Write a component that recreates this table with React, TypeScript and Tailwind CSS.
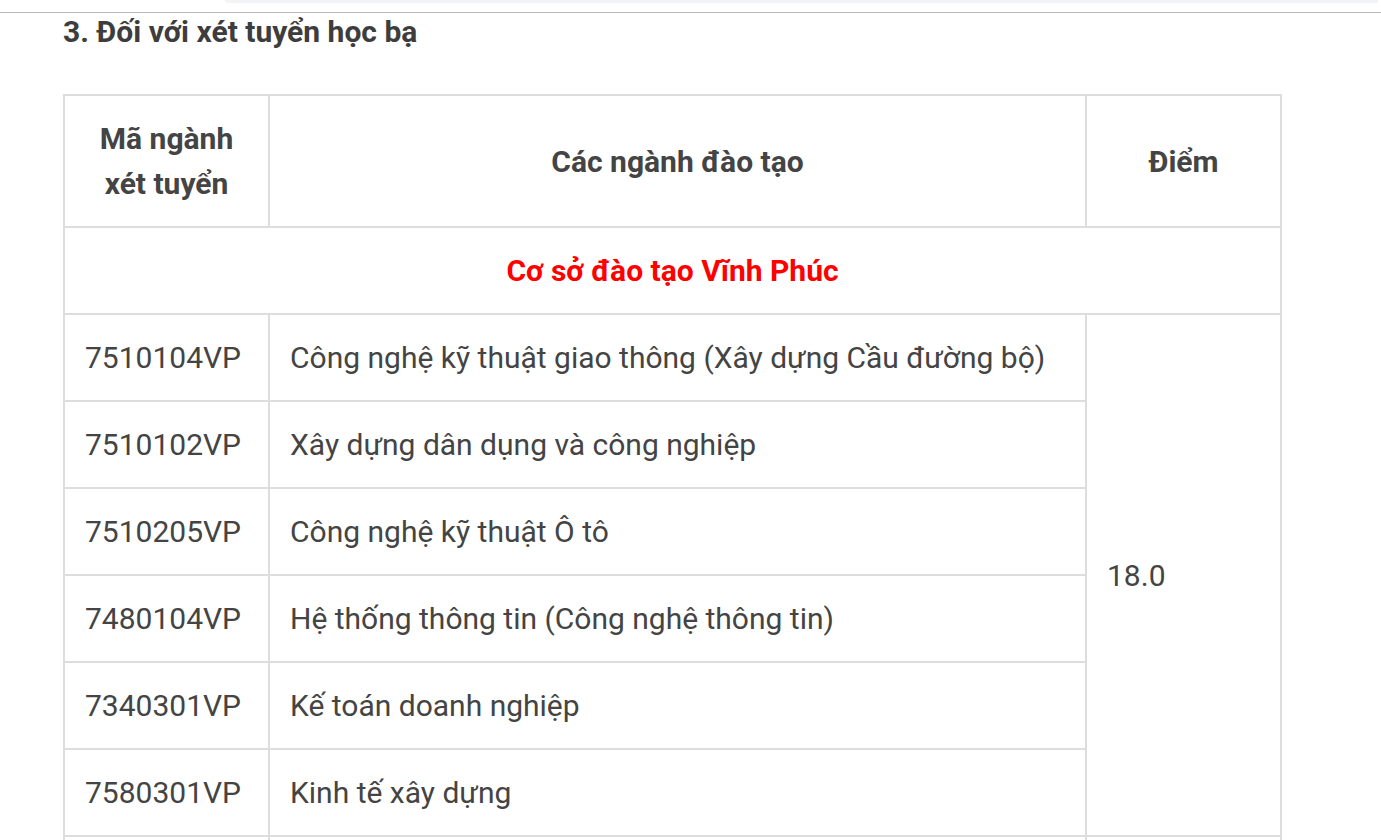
const rows = [
  { code: '7510104VP', name: 'Công nghệ kỹ thuật giao thông (Xây dựng Cầu đường bộ)' },
  { code: '7510102VP', name: 'Xây dựng dân dụng và công nghiệp' },
  { code: '7510205VP', name: 'Công nghệ kỹ thuật Ô tô' },
  { code: '7480104VP', name: 'Hệ thống thông tin (Công nghệ thông tin)' },
  { code: '7340301VP', name: 'Kế toán doanh nghiệp' },
  { code: '7580301VP', name: 'Kinh tế xây dựng' },
];

const cell = 'border-2 border-[#dddddd] px-5 py-5';

export default function App() {
  return (
    <div className="min-h-screen bg-white text-[#444] font-['Roboto','Liberation_Sans',sans-serif] overflow-hidden">
      <div className="h-[3px] ml-[225px] mr-[3px] bg-[#f1f3f5] rounded-bl-[12px]" />
      <div className="mt-[9px] border-t border-[#b8b8b8]" />
      <div className="pl-[63px]">
        <h3 className="text-[30px] leading-[38px] font-bold text-[#3d3d3d]">3. Đối với xét tuyển học bạ</h3>

        <table className="mt-[43px] w-[1219px] table-fixed border-collapse text-[30px] leading-[45px]">
          <colgroup>
            <col className="w-[205px]" />
            <col className="w-[817px]" />
            <col />
          </colgroup>
          <thead>
            <tr className="font-bold text-center">
              <th className={cell}>
                Mã ngành
                <br />
                xét tuyển
              </th>
              <th className={cell}>Các ngành đào tạo</th>
              <th className={cell}>Điểm</th>
            </tr>
          </thead>
          <tbody>
            <tr>
              <td colSpan={3} className={cell + ' text-center font-bold text-[#ff0000]'}>
                Cơ sở đào tạo Vĩnh Phúc
              </td>
            </tr>
            {rows.map((r, i) => (
              <tr key={r.code}>
                <td className={cell}>{r.code}</td>
                <td className={cell}>{r.name}</td>
                {i === 0 && (
                  <td rowSpan={rows.length} className={cell}>
                    18.0
                  </td>
                )}
              </tr>
            ))}
            <tr>
              <td className={cell}>&nbsp;</td>
              <td className={cell}>&nbsp;</td>
              <td className={cell}>&nbsp;</td>
            </tr>
          </tbody>
        </table>
      </div>
    </div>
  );
}
